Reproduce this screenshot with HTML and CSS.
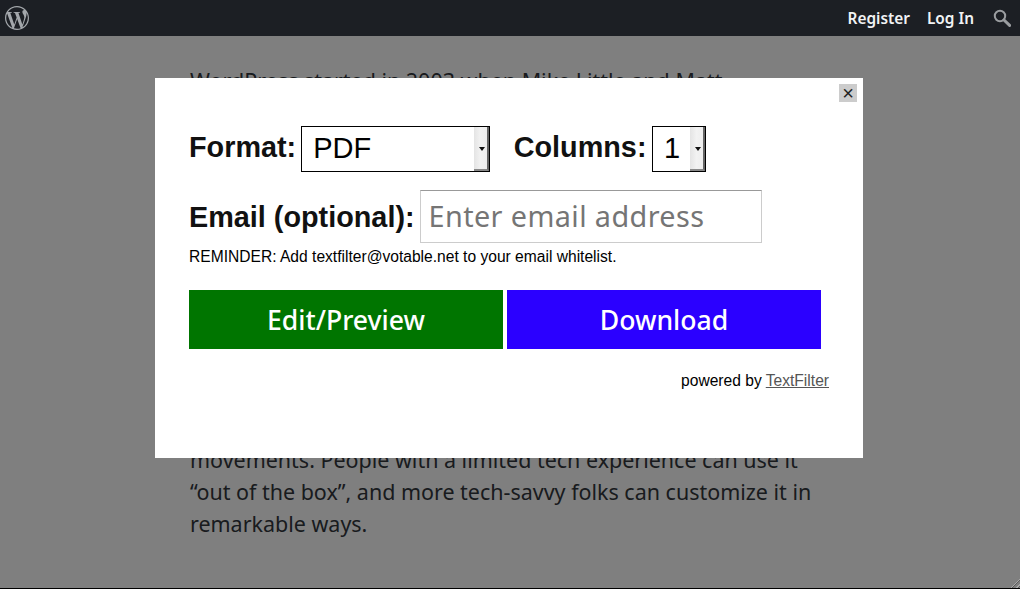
FILE: index.html
```html
<!DOCTYPE html>
<html lang="en">
<head>
<meta charset="utf-8">
<title>WordPress</title>
<link rel="stylesheet" href="styles.css">
</head>
<body>
<header class="topbar">
  <a class="logo" href="#" aria-label="WordPress">
    <svg viewBox="0 0 24 24" width="24" height="24"><path fill="currentColor" d="M21.469 6.825c.84 1.537 1.318 3.3 1.318 5.175 0 3.979-2.156 7.456-5.363 9.325l3.295-9.527c.615-1.54.82-2.771.82-3.864 0-.405-.026-.78-.07-1.11m-7.981.105c.647-.03 1.232-.105 1.232-.105.582-.075.514-.93-.067-.899 0 0-1.755.135-2.88.135-1.064 0-2.85-.15-2.85-.15-.585-.03-.661.855-.075.885 0 0 .54.061 1.125.09l1.68 4.605-2.37 7.08L5.354 6.9c.649-.03 1.234-.1 1.234-.1.585-.075.516-.93-.065-.896 0 0-1.746.138-2.874.138-.2 0-.438-.008-.69-.015C4.911 3.15 8.235 1.215 12 1.215c2.809 0 5.365 1.072 7.286 2.833-.046-.003-.091-.009-.141-.009-1.06 0-1.812.923-1.812 1.914 0 .89.513 1.643 1.06 2.531.411.72.89 1.643.89 2.977 0 .915-.354 1.994-.821 3.479l-1.075 3.585-3.9-11.61.001.014zM12 22.784c-1.059 0-2.081-.153-3.048-.437l3.237-9.406 3.315 9.087c.024.053.05.101.078.149-1.12.393-2.325.609-3.582.609M1.211 12c0-1.564.336-3.05.935-4.39L7.29 21.709C3.694 19.96 1.212 16.271 1.211 12M12 0C5.385 0 0 5.385 0 12s5.385 12 12 12 12-5.385 12-12S18.615 0 12 0"/></svg>
  </a>
  <nav class="topnav">
    <a href="#">Register</a>
    <a href="#">Log In</a>
    <a class="search" href="#" aria-label="Search">
      <svg viewBox="0 0 18 18" width="18" height="18"><circle cx="7" cy="7" r="5.2" fill="none" stroke="currentColor" stroke-width="2"/><path d="M11 11l5.6 5.4" fill="none" stroke="currentColor" stroke-width="3" stroke-linecap="round"/></svg>
    </a>
  </nav>
</header>

<main class="article">
  <p class="lead">WordPress started in 2003 when Mike Little and Matt</p>
  <p>movements. People with a limited tech experience can use it “out of the box”, and more tech-savvy folks can customize it in remarkable ways.</p>
</main>

<div class="edge"></div>

<div class="overlay">
  <section class="modal">
    <button class="close" type="button" aria-label="Close">×</button>
    <form class="form">
      <div class="row">
        <label class="label label-top">Format:</label>
        <span class="pick pick-format"><select><option>PDF</option></select></span>
        <label class="label label-top label-columns">Columns:</label>
        <span class="pick pick-columns"><select><option>1</option></select></span>
      </div>
      <div class="row row-email">
        <label class="label label-email">Email (optional):</label>
        <input class="email" type="text" placeholder="Enter email address">
      </div>
      <p class="reminder">REMINDER: Add textfilter@votable.net to your email whitelist.</p>
      <div class="actions">
        <button class="action edit" type="button">Edit/Preview</button>
        <button class="action download" type="button">Download</button>
      </div>
      <p class="powered">powered by <a href="#">TextFilter</a></p>
    </form>
  </section>
</div>
<div class="grip"></div>
</body>
</html>
```
FILE: styles.css
```css
html, body {
  margin: 0;
  height: 589px;
  overflow: hidden;
  background: #fff;
}
body {
  display: flex;
  flex-direction: column;
  font-family: "Liberation Sans", Arial, sans-serif;
}
a { color: inherit; }

.topbar {
  position: relative;
  z-index: 3;
  flex: none;
  height: 36px;
  box-sizing: border-box;
  padding: 0 9px 0 5px;
  display: flex;
  align-items: center;
  justify-content: space-between;
  background: #1c1f24;
  font-family: "Noto Sans", sans-serif;
  font-size: 15.4px;
  font-weight: 600;
  color: #f1f3f5;
}
.logo { display: flex; color: #a3a7ab; }
.topnav { display: flex; align-items: center; gap: 17px; }
.topnav a { text-decoration: none; }
.topnav .search { display: flex; color: #9a9da0; margin-left: 2px; }

.article {
  flex: 1;
  padding: 29px 0 0 190px;
  width: 630px;
  font-family: "Noto Sans", sans-serif;
  font-size: 21.47px;
  line-height: 32px;
  color: #32373c;
}
.article p { margin: 0; }
.article .lead { margin-bottom: 347px; }

.edge { flex: none; height: 1px; background: #000; }

.overlay {
  position: fixed;
  inset: 0;
  z-index: 2;
  padding: 78px 0 0 155px;
  background: rgba(0, 0, 0, .5);
}
.modal {
  position: relative;
  width: 708px;
  height: 380px;
  box-sizing: border-box;
  padding: 48px 34px 0;
  background: #fff;
  color: #000;
}
.close {
  position: absolute;
  top: 6px;
  right: 6px;
  width: 18px;
  height: 18px;
  padding: 0;
  border: 0;
  background: #ccc;
  color: #222;
  font: 20px/18px "Liberation Sans", sans-serif;
}

.row { display: flex; align-items: center; }
.row-email { margin-top: 18px; }
.label { font-size: 28.8px; font-weight: 700; color: #111; }
.label-top { padding-bottom: 3px; }
.label-email { padding-top: 2px; }
.label-columns { margin-left: 23.5px; }

.pick {
  position: relative;
  display: block;
  height: 46px;
  box-sizing: border-box;
  margin-left: 5px;
  border: 1px solid #000;
  background: #fff;
}
.pick-format { width: 189px; }
.pick-columns { width: 54px; margin-left: 5.6px; }
.pick::after {
  content: "";
  position: absolute;
  top: 0;
  right: 0;
  bottom: 0;
  width: 15px;
  box-sizing: border-box;
  border-right: 2px solid #666;
  border-bottom: 2px solid #888;
  background: linear-gradient(90deg, #e4e4e4, #f2f2f2 50%, #eee);
  pointer-events: none;
}
.pick::before {
  content: "";
  position: absolute;
  z-index: 1;
  top: 20px;
  right: 4px;
  border: 3.5px solid transparent;
  border-top: 4px solid #111;
  border-bottom: 0;
  pointer-events: none;
}
.pick select {
  appearance: none;
  display: block;
  width: 100%;
  height: 100%;
  padding: 0 0 3px 11px;
  border: 0;
  background: transparent;
  color: #000;
  font-family: "Liberation Sans", sans-serif;
  font-size: 29px;
}

.email {
  width: 342px;
  height: 53px;
  box-sizing: border-box;
  margin-left: 5px;
  padding: 0 8px 2px;
  border: 1px solid #ccc;
  border-top-color: #999;
  background: #fff;
  font-family: "Noto Sans", sans-serif;
  font-size: 28.8px;
  letter-spacing: .4px;
}
.email::placeholder { color: #757575; opacity: 1; }

.reminder {
  margin: 5px 0 0;
  font-size: 15.6px;
  line-height: 17px;
  color: #000;
}

.actions { display: flex; gap: 4px; margin-top: 25px; }
.action {
  width: 314px;
  height: 59px;
  padding: 1px 0 0;
  border: 0;
  color: #fff;
  font-family: "Noto Sans", sans-serif;
  font-size: 26.6px;
  font-weight: 500;
}
.edit { background: #007500; }
.download { background: #2b00ff; }

.powered {
  margin: 23px 0 0;
  text-align: right;
  font-size: 15.6px;
  line-height: 17px;
}
.powered a { color: #555; }

.grip {
  position: fixed;
  z-index: 4;
  right: 0;
  bottom: 1px;
  width: 12px;
  height: 12px;
  background: repeating-linear-gradient(135deg, transparent 0 2px, #a8a8a8 2px 3px, #5c5c5c 3px 4px);
  clip-path: polygon(100% 0, 100% 100%, 0 100%);
}
```
